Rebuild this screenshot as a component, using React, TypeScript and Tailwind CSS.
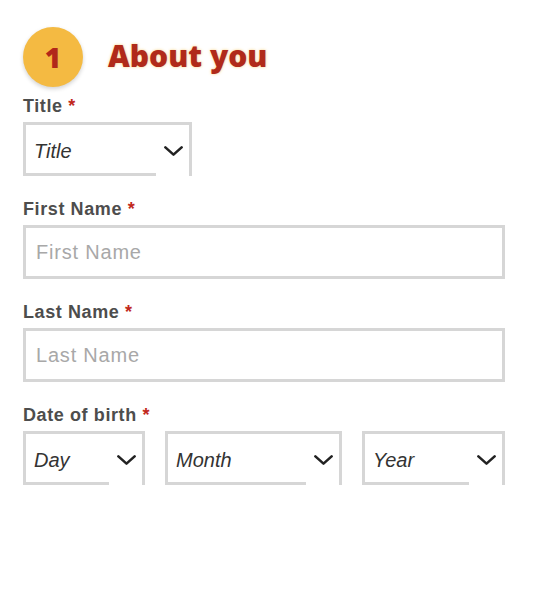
import React from "react";

function Label({ text }: { text: string }) {
  return (
    <label className="mb-[5px] block text-[18px] leading-[22px] font-bold tracking-[0.6px] text-[#4d4d4d]">
      {text} <span className="text-[#c1281c]">*</span>
    </label>
  );
}

function Chevron() {
  return (
    <svg
      className="pointer-events-none absolute right-[9px] top-[24px]"
      width="19"
      height="10"
      viewBox="0 0 19 10"
      fill="none"
    >
      <polyline
        points="1.4,1.4 9.5,8.6 17.6,1.4"
        stroke="#222"
        strokeWidth="2.6"
        strokeLinecap="round"
        strokeLinejoin="round"
      />
    </svg>
  );
}

function Select({ value, className }: { value: string; className: string }) {
  return (
    <div className={`relative ${className}`}>
      <select className="h-[54px] w-full appearance-none rounded-none border-[3px] border-[#d6d6d6] bg-white pl-[8px] pt-[3px] text-[20px] italic text-[#333] outline-none">
        <option>{value}</option>
      </select>
      <span className="absolute bottom-0 right-[3px] h-[3px] w-[33px] bg-white" />
      <Chevron />
    </div>
  );
}

function TextField({ placeholder }: { placeholder: string }) {
  return (
    <input
      placeholder={placeholder}
      className="h-[54px] w-full rounded-none border-[3px] border-[#d6d6d6] bg-white pl-[10px] text-[20px] tracking-[0.8px] text-[#333] outline-none placeholder:text-[#a8a8a8]"
    />
  );
}

export default function App() {
  return (
    <div className="min-h-screen bg-white pl-[23px] pt-[27px] font-['Liberation_Sans',Arial,sans-serif]">
      <div className="w-[482px]">
        <div className="flex items-center">
          <div className="flex h-[60px] w-[60px] items-center justify-center rounded-full bg-[#f4ba42] shadow-[0_2px_4px_rgba(0,0,0,0.18)]">
            <span className="font-['Open_Sans',sans-serif] text-[28px] leading-none font-extrabold text-[#b1271a]">
              1
            </span>
          </div>
          <h1 className="ml-[25px] -mt-[2px] font-['Open_Sans',sans-serif] text-[30px] leading-none font-extrabold text-[#b02a1a] [text-shadow:0_0_3px_rgba(244,186,66,0.7)]">
            About you
          </h1>
        </div>

        <div className="mt-[8px]">
          <Label text="Title" />
          <Select value="Title" className="w-[169px]" />
        </div>

        <div className="mt-[22px]">
          <Label text="First Name" />
          <TextField placeholder="First Name" />
        </div>

        <div className="mt-[22px]">
          <Label text="Last Name" />
          <TextField placeholder="Last Name" />
        </div>

        <div className="mt-[22px]">
          <Label text="Date of birth" />
          <div className="flex gap-[20px]">
            <Select value="Day" className="w-[122px]" />
            <Select value="Month" className="w-[177px]" />
            <Select value="Year" className="w-[143px]" />
          </div>
        </div>
      </div>
    </div>
  );
}
